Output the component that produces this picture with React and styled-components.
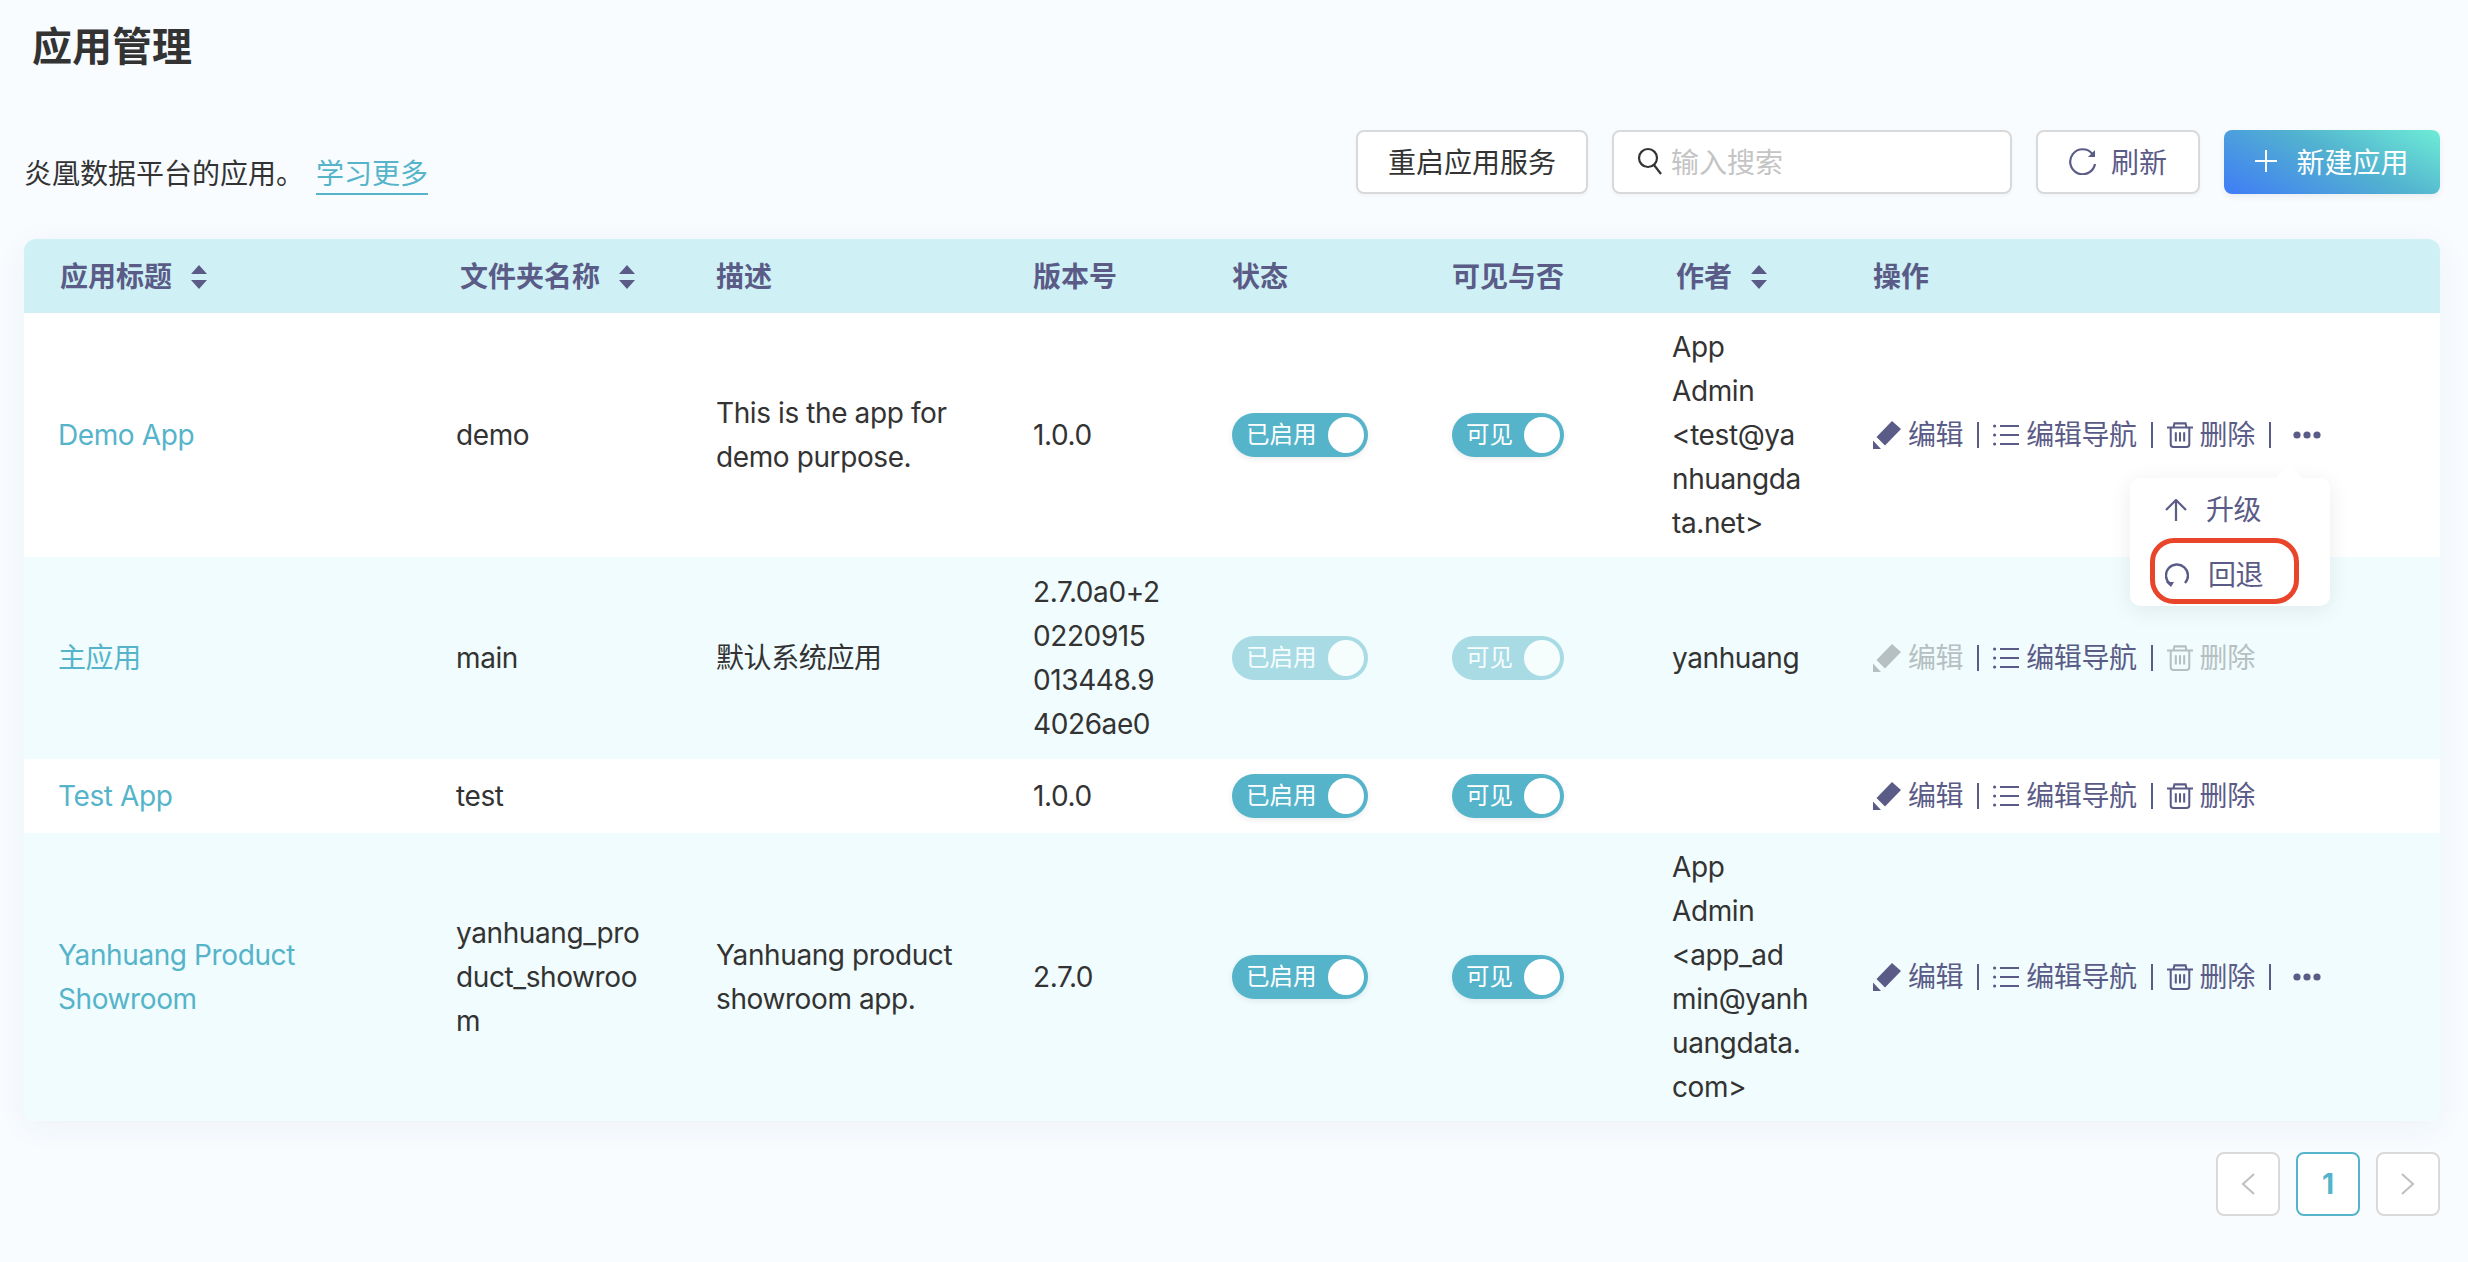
import React from "react";
import styled, { createGlobalStyle, css } from "styled-components";

const FONT = `Inter, "Noto Sans CJK SC", sans-serif`;
const INK = "#5b5b87";
const TEAL = "#55b4ca";

const GlobalStyle = createGlobalStyle`
  html, body {
    margin: 0;
    background: #f8fcff;
    font-family: ${FONT};
    color: #333;
  }
  * { box-sizing: border-box; }
`;

const Page = styled.div`
  width: 2468px;
  height: 1262px;
  padding: 19px 28px 0 24px;
  overflow: hidden;
`;

const Title = styled.h1`
  margin: 0 0 55px 8px;
  font-size: 40px;
  line-height: 56px;
  font-weight: 700;
  color: #333;
`;

const Toolbar = styled.div`
  display: flex;
  align-items: center;
  height: 64px;
  margin-bottom: 45px;
`;

const Intro = styled.div`
  flex: 1;
  font-size: 28px;
  line-height: 44px;
  padding-top: 24px;
`;

const LearnMore = styled.a`
  margin-left: 12px;
  color: ${TEAL};
  border-bottom: 2px solid ${TEAL};
  padding-bottom: 2px;
`;

const Button = styled.button`
  display: flex;
  align-items: center;
  justify-content: center;
  gap: ${props => props.$iconGap || 14}px;
  height: 64px;
  width: ${props => props.$width}px;
  margin-left: ${props => props.$gap}px;
  padding: 0 0 2px;
  font: 400 28px ${FONT};
  color: ${props => props.$color || "#333"};
  background: #fff;
  border: 2px solid #d9d9d9;
  border-radius: 8px;
  box-shadow: 0 2px 4px rgba(0, 0, 0, 0.04);
`;

const PrimaryButton = styled(Button)`
  color: #fff;
  border: 0;
  background: linear-gradient(28deg, #3f7cf7 0%, #52b2cf 55%, #6eecd6 100%);
  box-shadow: 0 3px 6px rgba(0, 0, 0, 0.06);
`;

const SearchBox = styled.div`
  display: flex;
  align-items: center;
  gap: 8px;
  width: 400px;
  height: 64px;
  margin-left: 24px;
  padding: 0 0 2px 23px;
  font-size: 28px;
  color: #c4c4c4;
  background: #fff;
  border: 2px solid #d9d9d9;
  border-radius: 8px;
  box-shadow: 0 2px 4px rgba(0, 0, 0, 0.04);
`;

const Card = styled.div`
  border-radius: 12px;
  box-shadow: 0 6px 32px rgba(30, 60, 90, 0.05);
`;

const Table = styled.table`
  width: 2416px;
  table-layout: fixed;
  border-collapse: separate;
  border-spacing: 0;
  font-size: 28px;
  line-height: 44px;
`;

const Col = styled.col`
  width: ${props => props.$width}px;
`;

const Head = styled.th`
  height: 74px;
  padding: 1px 0 0 ${props => props.$indent || 0}px;
  text-align: left;
  font-weight: 600;
  color: ${INK};
  background: #cff1f5;

  &:first-child { border-top-left-radius: 12px; }
  &:last-child { border-top-right-radius: 12px; }
`;

const HeadInner = styled.span`
  display: inline-flex;
  align-items: center;
  gap: 19px;
`;

const Row = styled.tr`
  height: ${props => props.$height}px;
  background: ${props => (props.$alt ? "#f0fcfd" : "#fff")};

  &:last-child td:first-child { border-bottom-left-radius: 12px; }
  &:last-child td:last-child { border-bottom-right-radius: 12px; }
`;

const Cell = styled.td`
  padding: 0 0 0 ${props => props.$indent || 0}px;
  white-space: pre-line;
  vertical-align: middle;
  letter-spacing: -0.4px;
`;

const AppLink = styled.a`
  color: ${TEAL};
`;

const Track = styled.div`
  position: relative;
  display: flex;
  align-items: center;
  width: ${props => props.$width}px;
  height: 44px;
  padding-left: 14px;
  font-size: 23.5px;
  letter-spacing: 0;
  color: #fff;
  border-radius: 22px;
  background: ${TEAL};
  box-shadow: 0 2px 6px rgba(0, 0, 0, 0.08);
  ${props => props.$disabled && css`opacity: 0.45; box-shadow: none;`}
`;

const Knob = styled.span`
  position: absolute;
  top: 4px;
  right: 4px;
  width: 36px;
  height: 36px;
  border-radius: 50%;
  background: #fff;
`;

const Ops = styled.div`
  position: relative;
  display: flex;
  align-items: center;
  height: 44px;
  color: ${INK};
`;

const Op = styled.span`
  display: inline-flex;
  align-items: center;
  gap: 7px;
  white-space: nowrap;
  color: ${props => (props.$disabled ? "#b6c0c3" : INK)};
`;

const MoreOp = styled(Op)`
  margin-left: 8px;
`;

const Divider = styled.span`
  width: 2px;
  height: 26px;
  margin: 0 14px;
  background: ${INK};
`;

const Popover = styled.div`
  position: absolute;
  z-index: 2;
  top: 65px;
  left: 257px;
  width: 200px;
  height: 128px;
  padding: 10px 0 0 35px;
  background: #fff;
  border-radius: 10px;
  box-shadow: 0 4px 22px rgba(0, 0, 0, 0.08);

  &::before {
    content: "";
    position: absolute;
    top: -9px;
    left: 149px;
    width: 20px;
    height: 20px;
    background: #fff;
    transform: rotate(45deg);
  }
`;

const MenuItem = styled.div`
  position: relative;
  display: flex;
  align-items: center;
  gap: 19px;
  height: 44px;
  margin-bottom: 21px;
`;

const Highlight = styled.div`
  position: absolute;
  z-index: 3;
  top: 125px;
  left: 277px;
  width: 149px;
  height: 66px;
  border: 5px solid #e8452a;
  border-radius: 24px;
`;

const Pager = styled.div`
  display: flex;
  justify-content: flex-end;
  gap: 16px;
  margin-top: 31px;
`;

const PageButton = styled.div`
  display: flex;
  align-items: center;
  justify-content: center;
  width: 64px;
  height: 64px;
  font-size: 28px;
  font-weight: 700;
  color: ${props => (props.$active ? TEAL : "#bfbfbf")};
  background: #fff;
  border: 2px solid ${props => (props.$active ? TEAL : "#d9d9d9")};
  border-radius: 8px;
`;

const SortIcon = () => (
  <svg width="16" height="24" viewBox="0 0 16 24" fill={INK}>
    <path d="M8 0l8 9H0zM8 24L0 15h16z" />
  </svg>
);

const EditIcon = () => (
  <svg width="28" height="28" viewBox="0 0 28 28" fill="currentColor">
    <path d="M19 0l9 8-16 16.5L3.5 16zM0 19.5L8 28H0z" />
  </svg>
);

const ListIcon = () => (
  <svg width="26" height="26" viewBox="0 0 26 26" fill="none" stroke="currentColor" strokeWidth="2">
    <path d="M7 4h19M7 13h19M7 22h19" />
    <circle cx="1.6" cy="4" r="1.6" fill="currentColor" stroke="none" />
    <circle cx="1.6" cy="13" r="1.6" fill="currentColor" stroke="none" />
    <circle cx="1.6" cy="22" r="1.6" fill="currentColor" stroke="none" />
  </svg>
);

const TrashIcon = () => (
  <svg width="26" height="28" viewBox="0 0 28 28" fill="none" stroke="currentColor" strokeWidth="2.2">
    <path d="M0 6h28M7 6l1-4.5h12L21 6M4 6v18a3 3 0 0 0 3 3h14a3 3 0 0 0 3-3V6M9.5 11v10M14 11v10M18.5 11v10" />
  </svg>
);

const DotsIcon = () => (
  <svg width="28" height="8" viewBox="0 0 28 8" fill="currentColor">
    <circle cx="4" cy="4" r="3.6" />
    <circle cx="14" cy="4" r="3.6" />
    <circle cx="24" cy="4" r="3.6" />
  </svg>
);

const SearchIcon = () => (
  <svg width="26" height="28" viewBox="0 0 26 28" fill="none" stroke="#333" strokeWidth="2.2">
    <circle cx="11" cy="11" r="9" />
    <path d="M17 18l7 9" />
  </svg>
);

const RefreshIcon = () => (
  <svg width="28" height="28" viewBox="0 0 28 28" fill="none" stroke={INK} strokeWidth="2.2">
    <path d="M23.5 7A12.5 12.5 0 1 0 26 17" />
    <path d="M26 3v7h-7z" fill={INK} stroke="none" />
  </svg>
);

const PlusIcon = () => (
  <svg width="22" height="22" viewBox="0 0 22 22" stroke="#fff" strokeWidth="2">
    <path d="M11 0v22M0 11h22" />
  </svg>
);

const UpIcon = () => (
  <svg width="22" height="22" viewBox="0 0 22 22" fill="none" stroke={INK} strokeWidth="2.2">
    <path d="M11 22V2M1 11l10-10 10 10" />
  </svg>
);

const RollbackIcon = () => (
  <svg width="24" height="24" viewBox="0 0 24 24" fill="none" stroke={INK} strokeWidth="2.4">
    <path d="M5 21A11 11 0 1 1 20 20" />
    <path d="M1 19h8l-3 5z" fill={INK} stroke="none" />
  </svg>
);

const Chevron = ({ dir }) => (
  <svg width="14" height="22" viewBox="0 0 14 22" fill="none" stroke="#bfbfbf" strokeWidth="2">
    <path d={dir === "left" ? "M13 1L2 11l11 10" : "M1 1l11 10L1 21"} />
  </svg>
);

const columns = [
  { label: "应用标题", width: 432, indent: 36, sort: true },
  { label: "文件夹名称", width: 260, indent: 4, sort: true },
  { label: "描述", width: 317 },
  { label: "版本号", width: 199 },
  { label: "状态", width: 220 },
  { label: "可见与否", width: 220 },
  { label: "作者", width: 201, indent: 4, sort: true },
  { label: "操作", width: 567 },
];

const apps = [
  {
    title: "Demo App",
    folder: "demo",
    desc: "This is the app for\ndemo purpose.",
    version: "1.0.0",
    author: "App\nAdmin\n<test@ya\nnhuangda\nta.net>",
    height: 244,
    more: true,
    menu: true,
  },
  {
    title: "主应用",
    folder: "main",
    desc: "默认系统应用",
    version: "2.7.0a0+2\n0220915\n013448.9\n4026ae0",
    author: "yanhuang",
    height: 202,
    system: true,
  },
  {
    title: "Test App",
    folder: "test",
    desc: "",
    version: "1.0.0",
    author: "",
    height: 74,
  },
  {
    title: "Yanhuang Product\nShowroom",
    folder: "yanhuang_pro\nduct_showroo\nm",
    desc: "Yanhuang product\nshowroom app.",
    version: "2.7.0",
    author: "App\nAdmin\n<app_ad\nmin@yanh\nuangdata.\ncom>",
    height: 288,
    more: true,
  },
];

const Switch = ({ label, width, disabled }) => (
  <Track $width={width} $disabled={disabled}>
    {label}
    <Knob />
  </Track>
);

const Actions = ({ app }) => (
  <Ops>
    <Op $disabled={app.system}>
      <EditIcon />
      编辑
    </Op>
    <Divider />
    <Op>
      <ListIcon />
      编辑导航
    </Op>
    <Divider />
    <Op $disabled={app.system}>
      <TrashIcon />
      删除
    </Op>
    {app.more && (
      <>
        <Divider />
        <MoreOp>
          <DotsIcon />
        </MoreOp>
      </>
    )}
    {app.menu && (
      <>
        <Popover>
          <MenuItem>
            <UpIcon />
            升级
          </MenuItem>
          <MenuItem>
            <RollbackIcon />
            回退
          </MenuItem>
        </Popover>
        <Highlight />
      </>
    )}
  </Ops>
);

export default function App() {
  return (
    <Page>
      <GlobalStyle />
      <Title>应用管理</Title>
      <Toolbar>
        <Intro>
          炎凰数据平台的应用。
          <LearnMore>学习更多</LearnMore>
        </Intro>
        <Button $width={232}>重启应用服务</Button>
        <SearchBox>
          <SearchIcon />
          输入搜索
        </SearchBox>
        <Button $width={164} $gap={24} $color={INK}>
          <RefreshIcon />
          刷新
        </Button>
        <PrimaryButton $width={216} $gap={24} $iconGap={19}>
          <PlusIcon />
          新建应用
        </PrimaryButton>
      </Toolbar>
      <Card>
        <Table>
          <colgroup>
            {columns.map(col => (
              <Col key={col.label} $width={col.width} />
            ))}
          </colgroup>
          <thead>
            <tr>
              {columns.map(col => (
                <Head key={col.label} $indent={col.indent}>
                  <HeadInner>
                    {col.label}
                    {col.sort && <SortIcon />}
                  </HeadInner>
                </Head>
              ))}
            </tr>
          </thead>
          <tbody>
            {apps.map((app, index) => (
              <Row key={app.folder} $height={app.height} $alt={index % 2 === 1}>
                <Cell $indent={34}>
                  <AppLink>{app.title}</AppLink>
                </Cell>
                <Cell>{app.folder}</Cell>
                <Cell>{app.desc}</Cell>
                <Cell>{app.version}</Cell>
                <Cell>
                  <Switch label="已启用" width={136} disabled={app.system} />
                </Cell>
                <Cell>
                  <Switch label="可见" width={112} disabled={app.system} />
                </Cell>
                <Cell>{app.author}</Cell>
                <Cell>
                  <Actions app={app} />
                </Cell>
              </Row>
            ))}
          </tbody>
        </Table>
      </Card>
      <Pager>
        <PageButton>
          <Chevron dir="left" />
        </PageButton>
        <PageButton $active>1</PageButton>
        <PageButton>
          <Chevron dir="right" />
        </PageButton>
      </Pager>
    </Page>
  );
}
